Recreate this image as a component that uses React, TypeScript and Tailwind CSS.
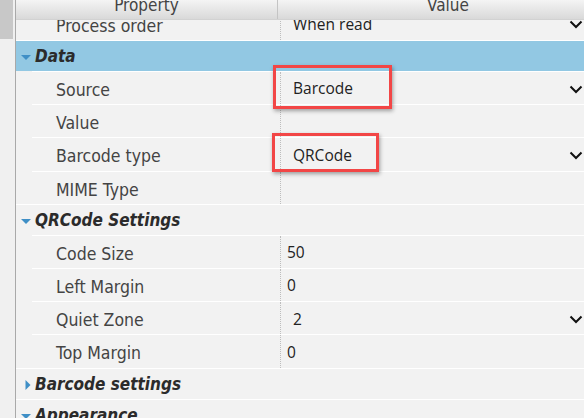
import React from "react";

type Row =
  | { kind: "cat"; label: string; open: boolean; selected?: boolean }
  | { kind: "prop"; label: string; value?: string; dropdown?: boolean };

const rows: Row[] = [
  { kind: "cat", label: "Data", open: true, selected: true },
  { kind: "prop", label: "Source", value: "Barcode", dropdown: true },
  { kind: "prop", label: "Value" },
  { kind: "prop", label: "Barcode type", value: "QRCode", dropdown: true },
  { kind: "prop", label: "MIME Type" },
  { kind: "cat", label: "QRCode Settings", open: true },
  { kind: "prop", label: "Code Size", value: "50" },
  { kind: "prop", label: "Left Margin", value: "0" },
  { kind: "prop", label: "Quiet Zone", value: "2", dropdown: true },
  { kind: "prop", label: "Top Margin", value: "0" },
  { kind: "cat", label: "Barcode settings", open: false },
  { kind: "cat", label: "Appearance", open: true },
];

const labelFont = "font-['DejaVu_Sans_Condensed','DejaVu_Sans',sans-serif]";
const valueFont = "font-['Open_Sans','Noto_Sans',sans-serif]";

const Chevron = () => (
  <svg width="14" height="9" viewBox="0 0 14 9" className="shrink-0">
    <path d="M1.5 1.5 L7 7 L12.5 1.5" fill="none" stroke="#111" strokeWidth="2" />
  </svg>
);

const Triangle = ({ open }: { open: boolean }) => (
  <svg width="10" height="10" viewBox="0 0 10 10" className="shrink-0">
    {open ? (
      <polygon points="0,3 10,3 5,8" fill="#3f8fc6" />
    ) : (
      <polygon points="4.5,0 9.5,5 4.5,10" fill="#3f8fc6" />
    )}
  </svg>
);

const PropRow = ({ row, first }: { row: Extract<Row, { kind: "prop" }>; first?: boolean }) => (
  <div className={`flex h-[33.2px] shrink-0 ${first ? "-mt-[13.2px]" : ""}`}>
    <div className="w-[16px] shrink-0" />
    <div className={`w-[248px] shrink-0 border-t border-white flex items-center pt-[4px] pl-[24px] text-[17.5px] text-[#444] ${labelFont}`}>
      {row.label}
    </div>
    <div className="flex-1 border-t border-white flex">
      <div className="flex-1 border-l border-dotted border-[#bdbdbd] flex items-center justify-between pt-[2px] pr-[1px]">
        {row.value !== undefined ? (
          <span className={`${valueFont} text-[15.5px] text-[#222] ${row.dropdown ? "pl-[12px]" : "pl-[6px]"}`}>
            {row.value}
          </span>
        ) : (
          <span />
        )}
        {row.dropdown && <Chevron />}
      </div>
    </div>
  </div>
);

const CatRow = ({ row }: { row: Extract<Row, { kind: "cat" }> }) => (
  <div
    className={`flex h-[31px] shrink-0 items-center gap-[4px] pl-[5px] pt-[2px] border-t border-white ${
      row.selected ? "bg-[#92c8e3]" : ""
    }`}
  >
    <Triangle open={row.open} />
    <span className={`${labelFont} font-bold italic text-[17px] text-[#2b2b2b]`}>{row.label}</span>
  </div>
);

export default function App() {
  return (
    <div className="relative w-[584px] h-[418px] overflow-hidden flex bg-[#f0f0f0]">
      {/* scrollbar strip */}
      <div className="w-[15px] shrink-0 flex flex-col">
        <div className="w-[13px] h-[39px] bg-[#c8c8c8]" />
      </div>
      <div className="w-px shrink-0 bg-[#a9a9a9]" />

      <div className="flex-1 flex flex-col bg-[#f2f2f2] min-w-0">
        {/* header */}
        <div className="h-[20px] shrink-0 flex overflow-hidden border-b border-[#d2d2d2] bg-gradient-to-b from-[#f4f4f4] to-[#d9d9d9]">
          <div className={`w-[262px] shrink-0 border-r border-[#c4c4c4] text-center text-[17px] leading-[16px] -mt-[3px] text-[#444] ${labelFont}`}>
            Property
          </div>
          <div className={`flex-1 pl-[149px] text-[17px] leading-[16px] -mt-[3px] text-[#444] ${labelFont}`}>
            Value
          </div>
        </div>

        {/* grid body */}
        <div className="flex-1 flex flex-col overflow-hidden">
          <PropRow row={{ kind: "prop", label: "Process order", value: "When read", dropdown: true }} first />
          {rows.map((r, i) =>
            r.kind === "cat" ? <CatRow key={i} row={r} /> : <PropRow key={i} row={r} />
          )}
        </div>
      </div>

      {/* annotation boxes */}
      <div className="absolute left-[273px] top-[65px] w-[119px] h-[44px] border-[3px] border-[#f24646] shadow-[1px_2px_4px_rgba(0,0,0,0.35)]" />
      <div className="absolute left-[272px] top-[133px] w-[107px] h-[39px] border-[3px] border-[#f24646] shadow-[1px_2px_4px_rgba(0,0,0,0.35)]" />
    </div>
  );
}
